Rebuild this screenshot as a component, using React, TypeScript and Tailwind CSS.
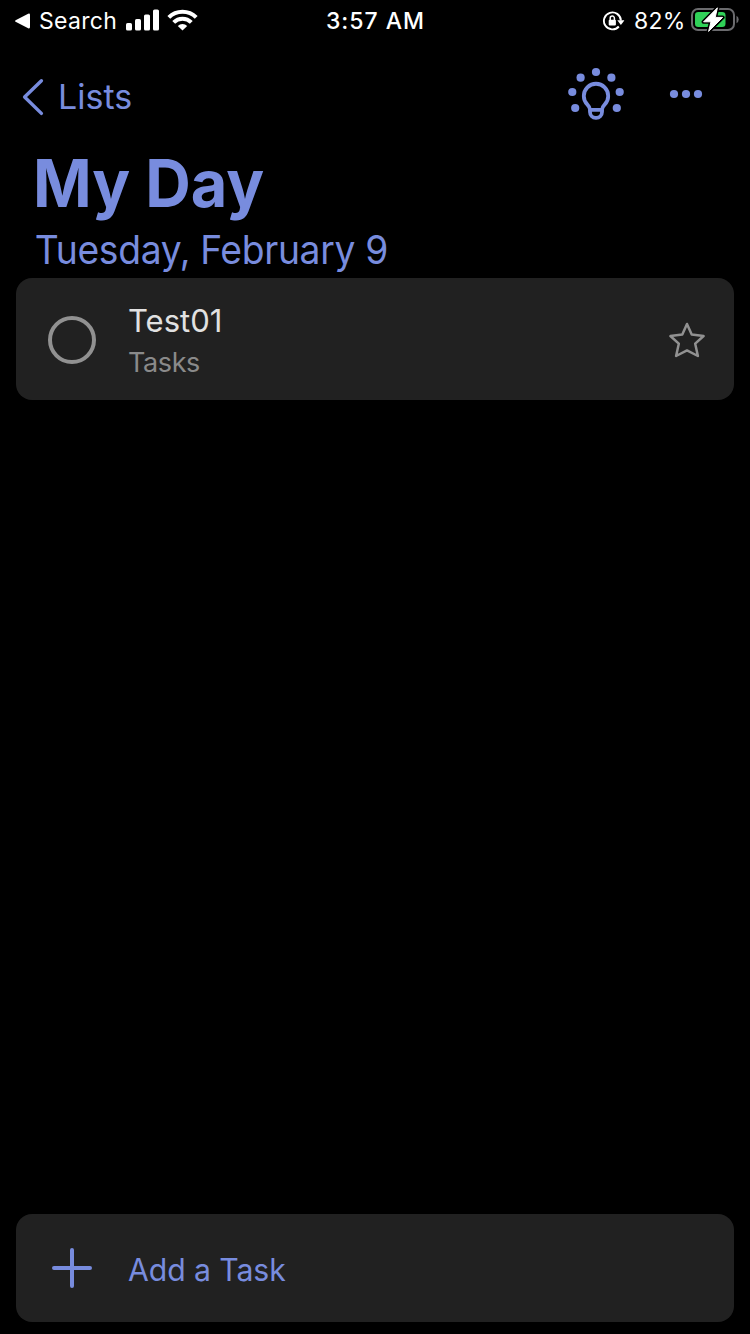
import React from "react";

function StatusBar() {
  return (
    <header className="flex h-[41px] items-center text-white">
      <div className="flex w-[250px] items-center pl-[15px]">
        <svg width="15" height="16" viewBox="0 0 15 16" fill="currentColor" aria-hidden="true">
          <path d="M0.6 7.2 13.2.7Q15 0 15 2V14Q15 16 13.2 15.3L.6 8.8Q-.5 8 .6 7.2Z" />
        </svg>
        <span className="ml-[9px] w-[78px] whitespace-nowrap text-[23px] leading-[28px] tracking-[0.3px]">Search</span>
        <svg className="ml-[9px] -translate-y-[1px]" width="33" height="22" viewBox="0 0 33 22" fill="currentColor" aria-hidden="true">
          <rect x="0" y="14" width="6" height="7.5" rx="1.6" />
          <rect x="9" y="10" width="6" height="11.5" rx="1.6" />
          <rect x="18" y="5.5" width="6" height="16" rx="1.6" />
          <rect x="27" y="0.5" width="6" height="21" rx="1.6" />
        </svg>
        <svg className="ml-[8px] -translate-y-[1px]" width="31" height="22" viewBox="0 0 31 22" fill="none" stroke="currentColor" strokeWidth="4" aria-hidden="true">
          <path d="M1.8 8.4a19.4 19.4 0 0 1 27.4 0" />
          <path d="M6.7 13.4a12.4 12.4 0 0 1 17.6 0" />
          <path d="M15.5 21.6 10.8 17a6.7 6.7 0 0 1 9.4 0Z" fill="currentColor" stroke="none" />
        </svg>
      </div>
      <div className="flex w-[250px] justify-center">
        <span className="whitespace-nowrap pl-[1px] text-[23px] font-medium leading-[28px] tracking-[1px]">3:57 AM</span>
      </div>
      <div className="flex w-[250px] items-center justify-end pr-[11px]">
        <svg className="translate-x-[0.5px]" width="22" height="20" viewBox="0 0 22 20" fill="none" stroke="currentColor" strokeWidth="1.9" aria-hidden="true">
          <path d="M16.3 15.5A8.5 8.5 0 1 1 18.4 9.5" />
          <path d="M14.8 9.2H22L18.4 14Z" fill="currentColor" stroke="none" />
          <rect x="6.2" y="8.7" width="7.2" height="5.8" rx="1" fill="currentColor" stroke="none" />
          <path d="M7.7 9V7.2a2.1 2.1 0 0 1 4.2 0V9" strokeWidth="1.5" />
        </svg>
        <span className="ml-[10px] w-[51px] whitespace-nowrap text-[23px] leading-[28px] tracking-[0.3px]">82%</span>
        <svg className="-mr-[1px] ml-[6px] -translate-y-[1px]" width="49" height="27" viewBox="0 0 49 27" aria-hidden="true">
          <rect x="1" y="3" width="42" height="21" rx="6" fill="none" stroke="#6b6b6e" strokeWidth="2" />
          <rect x="4" y="6" width="30.5" height="15" rx="3.3" fill="#30d158" />
          <path d="M45.5 9.8q2.2 1.2 2.2 3.7t-2.2 3.7Z" fill="#6b6b6e" />
          <path d="M26.4 1.8 12.6 15.8H20L17.6 25.4 31.6 11.4H24.2Z" fill="#000" stroke="#000" strokeWidth="4" strokeLinejoin="round" />
          <path d="M26.4 1.8 12.6 15.8H20L17.6 25.4 31.6 11.4H24.2Z" fill="#fff" stroke="#fff" strokeWidth="1" strokeLinejoin="round" />
        </svg>
      </div>
    </header>
  );
}

function NavBar() {
  return (
    <nav className="flex h-[108px] items-center pl-[22px] pr-[47px]">
      <button className="flex items-center pt-[4px]" aria-label="Back to lists">
        <svg width="22" height="38" viewBox="0 0 22 38" fill="none" stroke="currentColor" strokeWidth="3.4" strokeLinecap="round" strokeLinejoin="round" aria-hidden="true">
          <path d="M19.4 2.8 2.6 19 19.4 35.4" />
        </svg>
        <span className="ml-[14px] whitespace-nowrap text-[34px] leading-[42px]">Lists</span>
      </button>
      <button className="ml-auto" aria-label="Suggestions">
        <svg className="-translate-y-[1px]" width="56" height="54" viewBox="0 0 56 54" fill="currentColor" aria-hidden="true">
          <circle cx="28" cy="5" r="4.1" />
          <circle cx="12.6" cy="10.7" r="4.1" />
          <circle cx="43.4" cy="10.7" r="4.1" />
          <circle cx="4.3" cy="25" r="4.1" />
          <circle cx="51.7" cy="25" r="4.1" />
          <circle cx="7.2" cy="41" r="4.1" />
          <circle cx="48.8" cy="41" r="4.1" />
          <g fill="none" stroke="currentColor" strokeWidth="3.8" strokeLinejoin="round">
            <path d="M22 42.8C22 40.5 21 39.2 19.4 37.6A12.2 12.2 0 1 1 36.6 37.6C35 39.2 34 40.5 34 42.8Z" />
            <path d="M22 42.8v2.2a5.8 5.8 0 0 0 5.8 5.8h.4A5.8 5.8 0 0 0 34 45v-2.2" />
          </g>
        </svg>
      </button>
      <button className="ml-[45px]" aria-label="More options">
        <svg className="-translate-y-[1px]" width="34" height="10" viewBox="0 0 34 10" fill="currentColor" aria-hidden="true">
          <circle cx="5" cy="5" r="4.1" />
          <circle cx="17" cy="5" r="4.1" />
          <circle cx="29" cy="5" r="4.1" />
        </svg>
      </button>
    </nav>
  );
}

function TaskRow({ title, list }: { title: string; list: string }) {
  return (
    <li className="flex h-[122px] items-center rounded-[16px] bg-[#212121] pl-[32px] pr-[28px] pt-[2px]">
      <button className="size-[48px] rounded-full border-4 border-[#919191]" aria-label="Complete task" />
      <div className="ml-[32px] flex flex-col pt-[3px]">
        <span className="whitespace-nowrap text-[31px] leading-[42px] text-[#e1e1e1]">{title}</span>
        <span className="whitespace-nowrap text-[27px] leading-[41px] tracking-[-0.4px] text-[#8a8a8a]">{list}</span>
      </div>
      <button className="ml-auto" aria-label="Mark as important">
        <svg width="38" height="38" viewBox="0 0 38 38" fill="none" stroke="#919191" strokeWidth="2.5" strokeLinejoin="round" aria-hidden="true">
          <path d="M19 3 23.7 13.6 35.6 15 27.2 22.7 29.9 35 19 29.4 8.1 35 10.8 22.7 2.4 15 14.3 13.6Z" />
        </svg>
      </button>
    </li>
  );
}

export default function App() {
  return (
    <div className="flex h-[1334px] w-[750px] flex-col overflow-hidden bg-black font-['Inter','Liberation_Sans',sans-serif] text-[#788cde]">
      <StatusBar />
      <NavBar />
      <div className="pl-[31px]">
        <h1 className="origin-left scale-x-[0.955] whitespace-nowrap pl-[2px] text-[66px] font-bold leading-[68px]">My Day</h1>
        <p className="origin-left scale-x-[0.955] whitespace-nowrap pl-[4px] pt-[9px] text-[39px] leading-[48px] tracking-[-0.35px]">Tuesday, February 9</p>
      </div>
      <ul className="mt-[4px] px-[16px]">
        <TaskRow title="Test01" list="Tasks" />
      </ul>
      <div className="mt-auto px-[16px] pb-[12px]">
        <button className="flex h-[108px] w-full items-center rounded-[16px] bg-[#212121] pl-[36px]">
          <svg width="40" height="40" viewBox="0 0 40 40" fill="none" stroke="currentColor" strokeWidth="4" strokeLinecap="round" aria-hidden="true">
            <path d="M20 2V38M2 20H38" />
          </svg>
          <span className="ml-[36px] origin-left scale-x-[0.975] whitespace-nowrap pt-[4px] text-[31px] leading-[40px] tracking-[-0.1px]">Add a Task</span>
        </button>
      </div>
    </div>
  );
}
